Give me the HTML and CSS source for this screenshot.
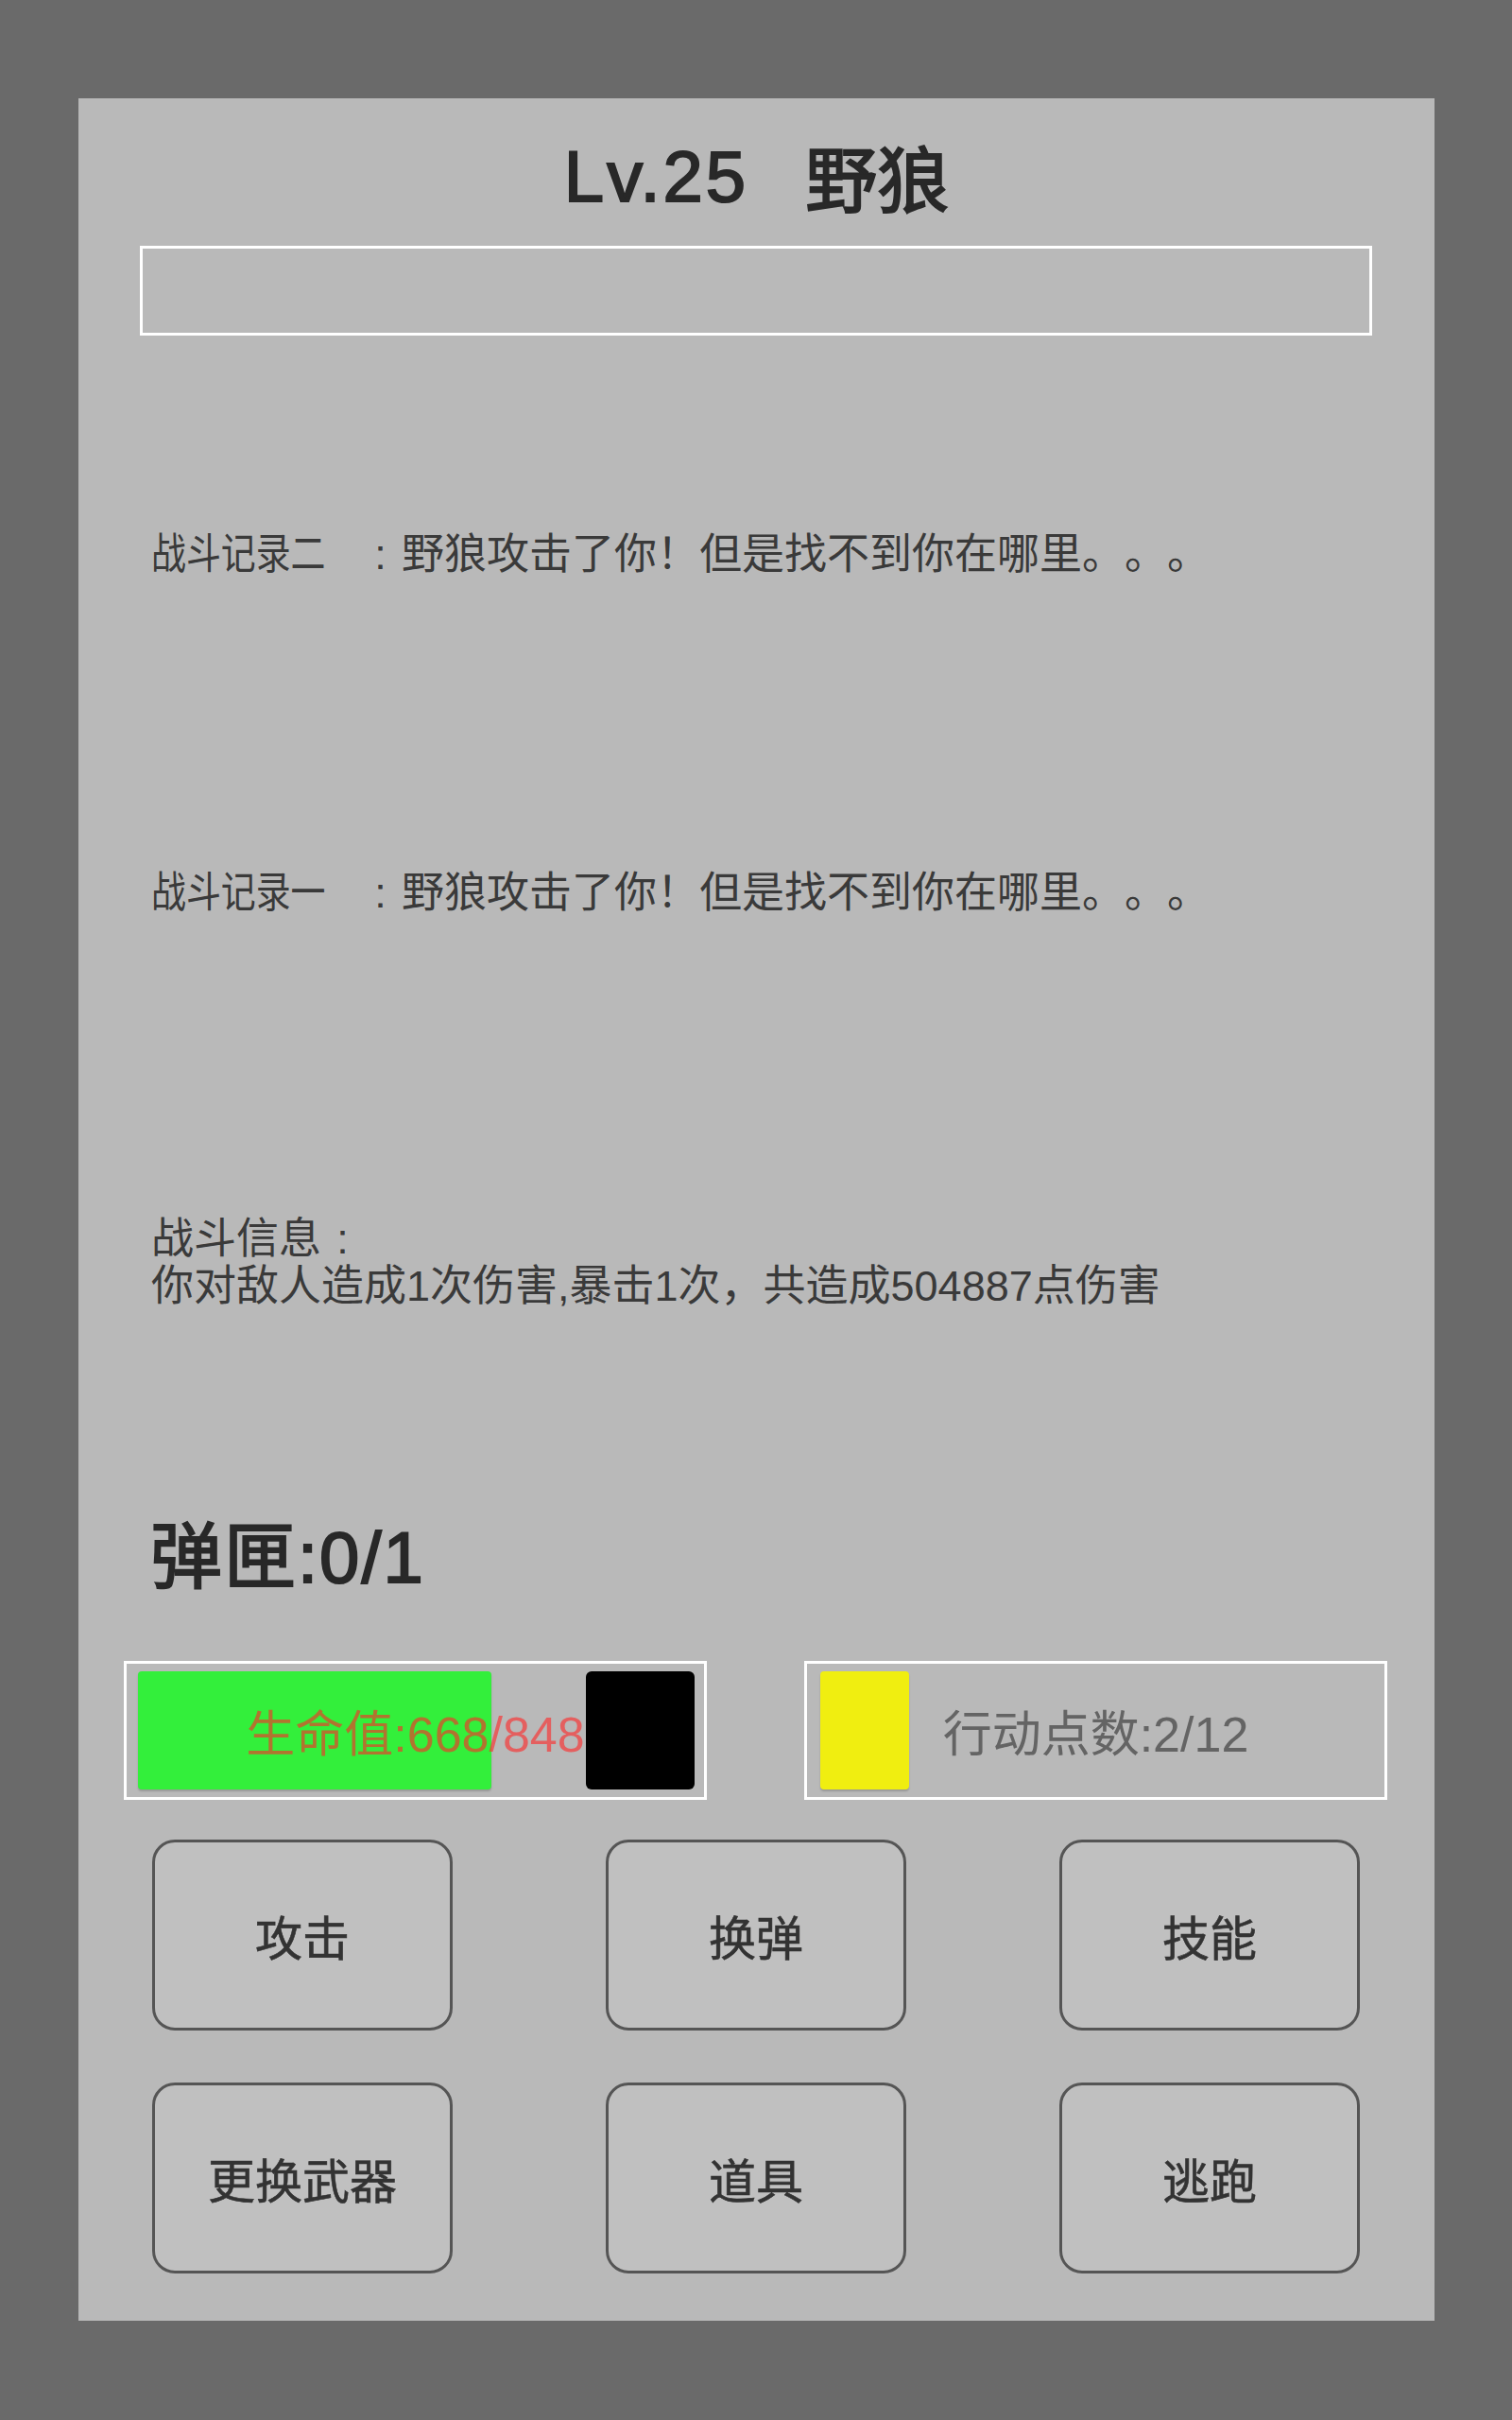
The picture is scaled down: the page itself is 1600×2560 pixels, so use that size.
FILE: index.html
```html
<!DOCTYPE html>
<html lang="zh-CN">
<head>
	<meta charset="UTF-8">
	<title>战斗</title>
	<link rel="stylesheet" href="styles.css">
</head>
<body>
	<div class="panel">
		<div class="title"><span class="lv">Lv.25</span><span>野狼</span></div>
		<div class="name-box"></div>

		<div class="log">
			<p class="log-line first"><span class="tag">战斗记录二</span><span class="colon">:</span>野狼攻击了你！但是找不到你在哪里。。。</p>
			<p class="log-line second"><span class="tag">战斗记录一</span><span class="colon">:</span>野狼攻击了你！但是找不到你在哪里。。。</p>
			<p class="log-info">战斗信息<span class="colon">:</span><br>你对敌人造成1次伤害,暴击1次，共造成504887点伤害</p>
		</div>

		<div class="ammo">弹匣:0/1</div>

		<div class="bars">
			<div class="bar hp">
				<div class="track"><div class="fill" style="width:78.8%"></div></div>
				<div class="block"></div>
				<span class="bar-text">生命值:668/848</span>
			</div>
			<div class="bar ap">
				<div class="track"><div class="fill" style="width:16.7%"></div></div>
				<span class="bar-text">行动点数:2/12</span>
			</div>
		</div>

		<ul class="actions">
			<li><a href="javascript:void(0)">攻击</a></li>
			<li><a href="javascript:void(0)">换弹</a></li>
			<li><a href="javascript:void(0)">技能</a></li>
			<li><a href="javascript:void(0)">更换武器</a></li>
			<li><a href="javascript:void(0)">道具</a></li>
			<li><a href="javascript:void(0)">逃跑</a></li>
		</ul>
	</div>
</body>
</html>
```

FILE: styles.css
```css
body,div,ul,li,p{
	margin: 0;
	padding: 0;
}
body{
	background: #6a6a6a;
	font-family: "Liberation Sans", "Noto Sans CJK SC", sans-serif;
	color: #333;
	text-spacing-trim: space-all;
}
ul{
	list-style-type: none;
}
a{
	color: #333;
	text-decoration: none;
}
.panel{
	width: 1435px;
	height: 2351px;
	margin: 104px 0 0 83px;
	padding-top: 8px;
	box-sizing: border-box;
	background: #b9b9b9;
}
.title{
	height: 148px;
	display: flex;
	justify-content: center;
	align-items: center;
	gap: 60px;
	font-size: 76px;
	color: #282828;
	-webkit-text-stroke: 2px #282828;
}
.title .lv{
	letter-spacing: 3px;
}
.name-box{
	height: 95px;
	margin: 0 66px 0 65px;
	border: 3px solid #fff;
	box-sizing: border-box;
}

/* 战斗记录 */
.log{
	padding-left: 77px;
	font-size: 45px;
	line-height: 50px;
	color: #3a3a3a;
}
.log .first{
	margin-top: 207px;
}
.log .second{
	margin-top: 308px;
}
.log .tag{
	display: inline-block;
	margin-right: -5px;
	transform: scaleX(0.82);
	transform-origin: left center;
}
.log .colon{
	display: inline-block;
	width: 45px;
	text-align: center;
}
.log-info{
	margin-top: 316px;
}
.ammo{
	margin-top: 217px;
	padding-left: 76px;
	font-size: 76px;
	line-height: 90px;
	letter-spacing: 2px;
	color: #282828;
	-webkit-text-stroke: 2px #282828;
}

/* 生命值 / 行动点数 */
.bars{
	margin-top: 64px;
	height: 147px;
	padding: 0 50px 0 48px;
	display: flex;
	justify-content: space-between;
}
.bar{
	position: relative;
	width: 617px;
	display: flex;
	border: 3px solid #fff;
	box-sizing: border-box;
}
.bar .track{
	flex: 1;
}
.bar .fill{
	height: 100%;
	border-radius: 4px;
	box-shadow: 0 2px 2px rgba(0,0,0,0.18);
}
.hp{
	padding: 8px 10px 8px 12px;
}
.hp .fill{
	background: #33ef3b;
}
.hp .block{
	position: relative;
	z-index: 2;
	width: 115px;
	background: #000;
	border-radius: 6px;
}
.ap{
	padding: 8px 34px 8px 14px;
}
.ap .fill{
	background: #f0ee10;
}
.bar-text{
	position: absolute;
	top: 0;
	left: 0;
	right: 0;
	bottom: 0;
	display: flex;
	justify-content: center;
	align-items: center;
	font-size: 52px;
}
.hp .bar-text{
	color: rgba(255,40,40,0.62);
}
.ap .bar-text{
	color: #646464;
}

/* 按钮 */
.actions{
	margin-top: 42px;
	padding-left: 78px;
	display: grid;
	grid-template-columns: repeat(3, 318px);
	grid-auto-rows: 202px;
	column-gap: 162px;
	row-gap: 55px;
}
.actions li a{
	display: flex;
	justify-content: center;
	align-items: center;
	height: 100%;
	border: 3px solid #555;
	border-radius: 24px;
	box-sizing: border-box;
	background: #c0c0c0;
	font-size: 50px;
	-webkit-text-stroke: 0.6px #333;
}
```
